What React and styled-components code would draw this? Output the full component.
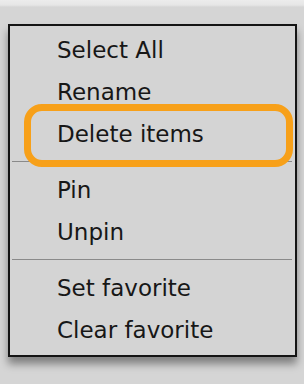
import { Fragment } from "react"
import styled, { createGlobalStyle } from "styled-components"

const Global = createGlobalStyle`
html, body {
  margin: 0;
  padding: 0;
  height: 100%;
  background: linear-gradient(#ececec 0, #e6e6e6 5px, #d5d5d5 7px, #d5d5d5 100%);
  font-family: "DejaVu Sans", "Liberation Sans", sans-serif;
}
#root {
  padding-top: 24px;
}
`

const Menu = styled.ul`
list-style: none;
margin: 0 0 0 8px;
padding: 3px 0 4px;
width: 289px;
box-sizing: border-box;
background: #d4d4d4;
border: 2px solid #141414;
box-shadow: 0 7px 8px rgba(0, 0, 0, 0.4);
`

const Item = styled.li`
position: relative;
padding-left: 47px;
height: 42px;
line-height: 42px;
font-size: 23px;
color: #171717;
`

const Separator = styled.li`
height: 1px;
margin: 6px 3px 7px 2px;
background: #8a8a8a;
`

const Highlight = styled.span`
position: absolute;
top: -9px;
bottom: -12px;
left: 14px;
right: 2px;
border: 7px solid #f7a019;
border-radius: 18px;
pointer-events: none;
`

const groups = [
  ["Select All", "Rename", "Delete items"],
  ["Pin", "Unpin"],
  ["Set favorite", "Clear favorite"],
]

const App = () => {
  return (
    <>
      <Global />
      <Menu>
        {groups.map((group, i) => (
          <Fragment key={i}>
            {i > 0 && <Separator />}
            {group.map((label) => (
              <Item key={label}>
                {label}
                {label === "Delete items" && <Highlight />}
              </Item>
            ))}
          </Fragment>
        ))}
      </Menu>
    </>
  )
}

export default App
